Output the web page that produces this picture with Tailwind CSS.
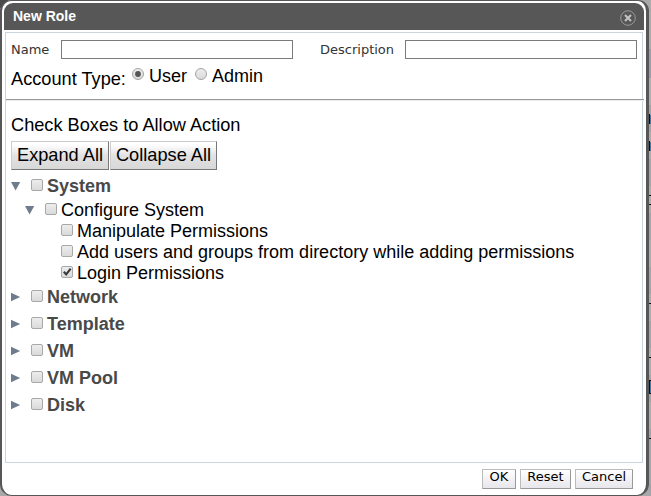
<!DOCTYPE html>
<html lang="en">
<head>
<meta charset="utf-8">
<title>New Role</title>
<script src="https://cdn.jsdelivr.net/npm/@tailwindcss/browser@4"></script>
</head>
<body class="relative h-[496px] w-[651px] overflow-hidden bg-[#a9a9ab] font-['Liberation_Sans',Arial,sans-serif] text-[18px] leading-[23px] text-black">
<!-- page behind the dialog -->
<div class="absolute left-0 top-0 h-2 w-2 bg-[#4a4a4c]"></div>
<div class="absolute right-0 top-0 flex h-[496px] w-[2px] flex-col">
  <div class="h-[49px] bg-[#acacac]"></div><div class="h-[29px] bg-[#9a9dab]"></div><div class="h-[27px] bg-[#b0b0b0]"></div>
  <div class="h-[27px] bg-[#a2a6aa]"></div><div class="h-[27px] bg-[#adadad]"></div><div class="h-[27px] bg-[#a2a6aa]"></div>
  <div class="h-[27px] bg-[#adadad]"></div><div class="h-[27px] bg-[#a2a6aa]"></div><div class="h-[27px] bg-[#adadad]"></div>
  <div class="h-[27px] bg-[#a2a6aa]"></div><div class="h-[27px] bg-[#adadad]"></div><div class="h-[27px] bg-[#a2a6aa]"></div>
  <div class="h-[27px] bg-[#adadad]"></div><div class="h-[27px] bg-[#a2a6aa]"></div><div class="h-[27px] bg-[#adadad]"></div>
  <div class="grow bg-[#a2a6aa]"></div>
</div>
<svg class="absolute right-0 top-0" width="2" height="496" fill="#0c0c1c"><path d="M0 114h1v10H0zM0 141h1v10H0zM0 195h2v1H0zM0 204h2v1H0zM0 303h2v1H0zM0 357h2v1H0zM0 380h1v14H0zM1 380h1v1H1zM1 393h1v1H1zM0 438h2v1H0z"/><path d="M1 115h1v9H1zM1 142h1v9H1zM1 381h1v12H1z" fill="#4179a8"/></svg>

<main class="relative flex h-[496px] w-[649px] flex-col rounded-[11px] rounded-b-[12px] border-b border-l-2 border-r-[3px] border-t border-[#575757] bg-white pl-[3px] pr-[2px] pt-[2px]">
  <header class="-ml-px flex h-[27px] shrink-0 items-center justify-between rounded-t-[9px] bg-[#575757] pl-[9px] pr-[8px]">
    <h1 class="pb-[2px] text-[14px] font-bold leading-[16px] text-white">New Role</h1>
    <svg class="mt-[3px]" width="16" height="16" viewBox="0 0 16 16" fill="none"><circle cx="8" cy="8" r="7.3" stroke="#9a9a9a"/><path d="M5 5l6 6M11 5l-6 6" stroke="#c4c4c4" stroke-width="2"/></svg>
  </header>
  <section class="mr-px mt-[2px] flex h-[431px] shrink-0 flex-col border border-[#cbd5dd]">
    <div class="mt-[7px] flex h-[19px] items-center pl-[5px] font-['DejaVu_Sans',sans-serif] text-[13px] leading-[15px] text-[#333]">
      <label class="w-[50px]">Name</label>
      <div class="h-[19px] w-[232px] border border-[#7b7b7b] bg-white"></div>
      <label class="ml-[27px] w-[85px]">Description</label>
      <div class="h-[19px] w-[232px] border border-[#7b7b7b] bg-white"></div>
    </div>
    <div class="mt-[6px] flex h-[24px] items-start pl-[5px]">
      <span class="mt-[3px] w-[121px] text-[18.2px]">Account Type:</span>
      <svg class="mt-[3px]" width="12" height="12"><circle cx="6" cy="6" r="5.5" fill="url(#g)" stroke="#a3a3a3"/><circle cx="6" cy="6" r="2.9" fill="#555"/></svg>
      <span class="ml-[5px] w-[46px]">User</span>
      <svg class="mt-[3px]" width="12" height="12"><circle cx="6" cy="6" r="5.5" fill="url(#g)" stroke="#a3a3a3"/></svg>
      <span class="ml-[5px]">Admin</span>
    </div>
    <div class="-mr-[2px] mt-[10px] h-[2px] shrink-0 border-b border-t border-b-[#ececec] border-t-[#999]"></div>
    <p class="mt-[13px] pl-[5px] text-[18.2px]">Check Boxes to Allow Action</p>
    <div class="mt-[4px] flex gap-px pl-[5px] text-[18.2px]">
      <button class="h-[29px] w-[98px] border border-b-[#777] border-l-[#ccc] border-r-[#777] border-t-[#ccc] bg-linear-to-b from-white from-10% via-[#e2e2e2] to-[#d8d8d8]">Expand All</button>
      <button class="h-[29px] w-[107px] border border-b-[#777] border-l-[#ccc] border-r-[#777] border-t-[#ccc] bg-linear-to-b from-white from-10% via-[#e2e2e2] to-[#d8d8d8]">Collapse All</button>
    </div>
    <ul class="mt-[5px] pl-[5px]">
      <li class="flex h-[24px] font-bold text-[#494949]"><svg class="mt-[6px]" width="20" height="10"><path d="M0 1h9.2L4.6 9.5z" fill="#6f7c8d"/></svg><svg class="mt-[4px]" width="12" height="12"><use href="#box"/></svg><span class="ml-[4px]">System</span></li>
      <li class="flex h-[21px] pl-[14px]"><svg class="mt-[6px]" width="20" height="10"><path d="M0 1h9.2L4.6 9.5z" fill="#6f7c8d"/></svg><svg class="mt-[4px]" width="12" height="12"><use href="#box"/></svg><span class="ml-[4px]">Configure System</span></li>
      <li class="flex h-[21px] pl-[50px]"><svg class="mt-[4px]" width="12" height="12"><use href="#box"/></svg><span class="ml-[4px]">Manipulate Permissions</span></li>
      <li class="flex h-[21px] pl-[50px]"><svg class="mt-[4px]" width="12" height="12"><use href="#box"/></svg><span class="ml-[4px]">Add users and groups from directory while adding permissions</span></li>
      <li class="flex h-[24px] pl-[50px]"><svg class="mt-[4px]" width="12" height="12"><use href="#box"/><path d="M2.8 5.8l2.4 2.6L9.7 2.6" fill="none" stroke="#3a3a3a" stroke-width="2.1"/></svg><span class="ml-[4px]">Login Permissions</span></li>
      <li class="flex h-[27px] font-bold text-[#494949]"><svg class="mt-[6px]" width="20" height="10"><path d="M0 0.8v8.4l9.2-4.2z" fill="#6f7c8d"/></svg><svg class="mt-[4px]" width="12" height="12"><use href="#box"/></svg><span class="ml-[4px]">Network</span></li>
      <li class="flex h-[27px] font-bold text-[#494949]"><svg class="mt-[6px]" width="20" height="10"><path d="M0 0.8v8.4l9.2-4.2z" fill="#6f7c8d"/></svg><svg class="mt-[4px]" width="12" height="12"><use href="#box"/></svg><span class="ml-[4px]">Template</span></li>
      <li class="flex h-[27px] font-bold text-[#494949]"><svg class="mt-[6px]" width="20" height="10"><path d="M0 0.8v8.4l9.2-4.2z" fill="#6f7c8d"/></svg><svg class="mt-[4px]" width="12" height="12"><use href="#box"/></svg><span class="ml-[4px]">VM</span></li>
      <li class="flex h-[27px] font-bold text-[#494949]"><svg class="mt-[6px]" width="20" height="10"><path d="M0 0.8v8.4l9.2-4.2z" fill="#6f7c8d"/></svg><svg class="mt-[4px]" width="12" height="12"><use href="#box"/></svg><span class="ml-[4px]">VM Pool</span></li>
      <li class="flex h-[27px] font-bold text-[#494949]"><svg class="mt-[6px]" width="20" height="10"><path d="M0 0.8v8.4l9.2-4.2z" fill="#6f7c8d"/></svg><svg class="mt-[4px]" width="12" height="12"><use href="#box"/></svg><span class="ml-[4px]">Disk</span></li>
    </ul>
  </section>
  <footer class="mt-[6px] flex justify-end gap-[4px] pr-[11px] font-['DejaVu_Sans',sans-serif] text-[13px] leading-[14px]">
    <button class="h-[20px] w-[34px] rounded-[1px] border border-b-[#999] border-l-[#bbb] border-r-[#999] border-t-[#bbb] bg-linear-to-b from-white to-[#e6e6ec] pb-[4px]">OK</button>
    <button class="h-[20px] w-[51px] rounded-[1px] border border-b-[#999] border-l-[#bbb] border-r-[#999] border-t-[#bbb] bg-linear-to-b from-white to-[#e6e6ec] pb-[4px]">Reset</button>
    <button class="h-[20px] w-[58px] rounded-[1px] border border-b-[#999] border-l-[#bbb] border-r-[#999] border-t-[#bbb] bg-linear-to-b from-white to-[#e6e6ec] pb-[4px]">Cancel</button>
  </footer>
</main>
<svg class="absolute left-0 top-0" width="0" height="0"><defs><linearGradient id="g" x2="0" y2="1"><stop stop-color="#eee"/><stop offset="1" stop-color="#d9d9d9"/></linearGradient><g id="box"><rect x=".5" y=".5" width="11" height="11" rx="1.5" fill="url(#g)" stroke="#a8a8a8"/></g></defs></svg>
</body>
</html>
